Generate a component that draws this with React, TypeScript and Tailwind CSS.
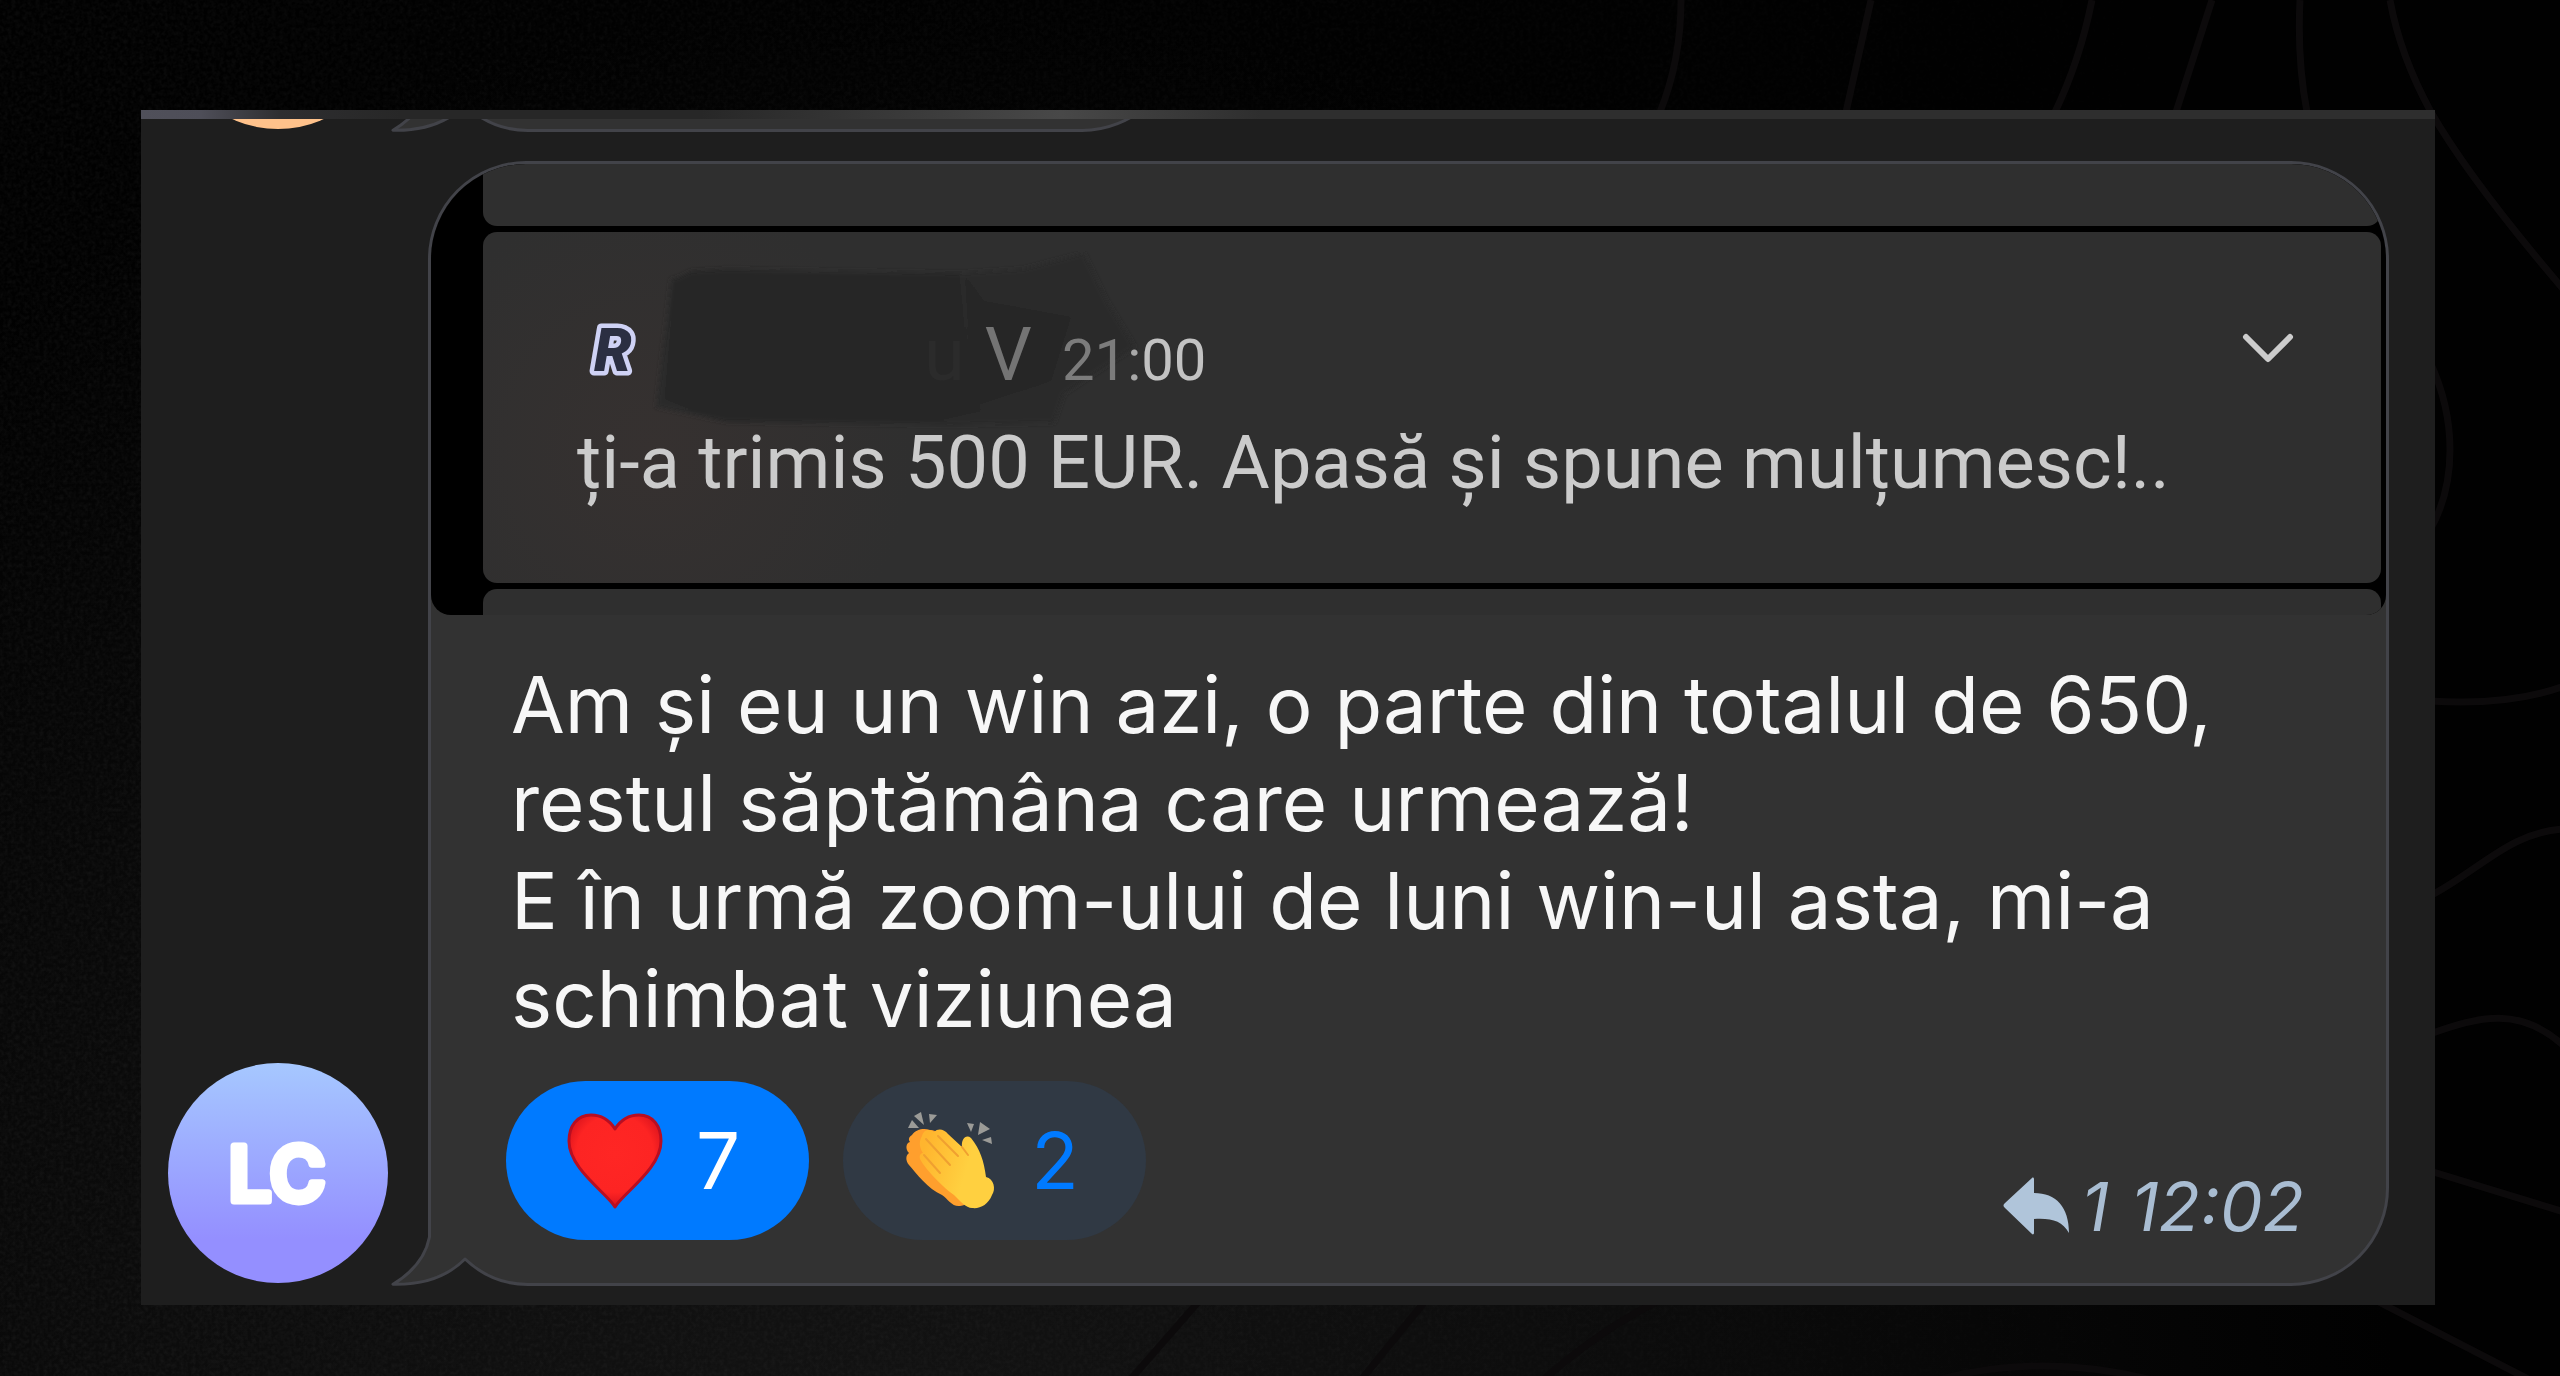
// App.tsx
import type { ReactNode } from "react";

interface Reaction {
  emoji: "heart" | "clap";
  count: number;
  chosen: boolean;
}

const reactions: Reaction[] = [
  { emoji: "heart", count: 7, chosen: true },
  { emoji: "clap", count: 2, chosen: false },
];

function Backdrop() {
  return (
    <svg
      className="absolute inset-0 w-full h-full"
      viewBox="0 0 2560 1376"
      preserveAspectRatio="none"
      aria-hidden="true"
    >
      <defs>
        <filter id="grain" x="0" y="0" width="100%" height="100%">
          <feTurbulence type="fractalNoise" baseFrequency="0.25" numOctaves="3" seed="4" />
          <feColorMatrix values="0 0 0 0 1  0 0 0 0 1  0 0 0 0 1  0.16 0 0 0 -0.045" />
        </filter>
        <radialGradient id="glow" gradientUnits="userSpaceOnUse" cx="900" cy="1500" r="1500">
          <stop offset="0" stopColor="#131313" />
          <stop offset="0.5" stopColor="#0c0c0c" />
          <stop offset="1" stopColor="#010101" />
        </radialGradient>
        <linearGradient id="fade" x1="0" x2="1">
          <stop offset="0" stopColor="#fff" />
          <stop offset="0.6" stopColor="#888" />
          <stop offset="0.95" stopColor="#000" />
        </linearGradient>
        <mask id="grainMask">
          <rect width="2560" height="1376" fill="url(#fade)" />
        </mask>
      </defs>
      <rect width="2560" height="1376" fill="url(#glow)" />
      <g mask="url(#grainMask)">
        <rect width="2560" height="1376" filter="url(#grain)" opacity="0.45" />
      </g>
      <g fill="none" stroke="#0c0a0b" strokeWidth="7">
        <path d="M1681 0Q1681 60 1660 112" />
        <path d="M1871 0L1846 112" />
        <path d="M2092 0Q2080 60 2055 112" />
        <path d="M2212 0L2176 112" />
        <path d="M2300 0Q2297 60 2307 112" />
        <path d="M2390 0Q2400 55 2431 112Q2470 180 2564 290" />
        <path d="M2430 362Q2450 405 2450 450Q2450 495 2430 530" />
        <path d="M2430 701Q2510 706 2564 686" />
        <path d="M2430 896C2480 870 2510 832 2564 829" />
        <path d="M2430 1034C2480 1016 2520 1006 2564 1046" />
        <path d="M2430 1171L2564 1212" />
        <path d="M2375 1300L2530 1380" />
        <path d="M1200 1300L1130 1380" />
        <path d="M1426 1300L1361 1380" />
        <path d="M1660 1300Q1600 1330 1543 1380" />
        <path d="M1930 1382Q2040 1350 2160 1382" />
      </g>
    </svg>
  );
}

// bottom left corner of a bubble: hides the square corner and draws the tail
function BubbleTail() {
  return (
    <svg
      className="absolute bottom-0 -left-[40px]"
      width="140"
      height="60"
      viewBox="0 0 140 60"
      aria-hidden="true"
    >
      <rect width="140" height="60" fill="#1e1e1e" />
      <path
        d="M41.5 0V11C37 34 22 48 5 58.3C36 59 60 50 77 33C95 50 116 58.5 140 58.5V0Z"
        fill="#323232"
      />
      <path
        d="M41.5 0V11C37 34 22 48 5 58.3C36 59 60 50 77 33C95 50 116 58.5 140 58.5"
        fill="none"
        stroke="#424349"
        strokeWidth="3"
        strokeLinejoin="round"
      />
    </svg>
  );
}

function Bubble({ className, children }: { className: string; children?: ReactNode }) {
  return (
    <div className={`relative ${className}`}>
      <div className="min-h-60 rounded-[98px] rounded-bl-none border-[3px] border-[#424349] bg-[#323232]">
        {children}
      </div>
      <BubbleTail />
    </div>
  );
}

function RevolutLogo() {
  return (
    <svg width="64" height="70" viewBox="0 0 64 70" role="img" aria-label="Revolut">
      <text
        x="10"
        y="56"
        fontFamily="Roboto, sans-serif"
        fontSize="60"
        fontWeight="900"
        fontStyle="italic"
        fill="#2b2f42"
        stroke="#cfd2f5"
        strokeWidth="9"
        strokeLinejoin="round"
        paintOrder="stroke"
      >
        R
      </text>
    </svg>
  );
}

// brushed-over part of the sender name
function Smudge() {
  return (
    <svg
      className="absolute left-[74px] -top-[50px]"
      width="490"
      height="180"
      viewBox="0 0 490 180"
      aria-hidden="true"
    >
      <g filter="url(#soft)">
        <path
          d="M20 28L76 18L310 22L372 18L433 2L456 50L484 96L413 143L403 172L300 174L76 171L5 156Z"
          fill="#2a2a2a"
        />
        <path d="M24 28L40 20L76 18L180 24L308 22L318 130L330 160L280 171L76 171L44 160L14 148Z" fill="#252525" />
        <path d="M314 24L333 50L420 66L400 130L322 156Z" fill="#282828" />
      </g>
      <filter id="soft">
        <feGaussianBlur stdDeviation="2" />
      </filter>
    </svg>
  );
}

function Notification() {
  return (
    <div className="flex flex-col gap-[6px] overflow-hidden rounded-t-[95px] rounded-b-[20px] bg-black pl-[52px] pr-[5px]">
      <div className="h-[62px] rounded-b-[14px] bg-[#2f2f2f]" />
      <div className="rounded-[14px] bg-[#2f2f2f] bg-[radial-gradient(circle_at_170px_220px,#363130,#2f2f2f_260px)] pl-[94px] pr-[83px] pt-[69px] pb-[66px] font-['Roboto',sans-serif] text-[74px] leading-[108px] text-[#cbcbcb]">
        <div className="relative flex items-center justify-between">
          <Smudge />
          <div className="relative flex items-center">
            <div className="pl-[7px] pb-[10px]">
              <RevolutLogo />
            </div>
            <div className="flex items-baseline pl-[276px]">
              <span className="text-[#2b2b2b]">u</span>
              <span className="pl-[20px] text-[#747474]">V</span>
              <time className="pl-[30px] text-[58px] leading-none">
                <span className="text-[#7c7c7c]">21</span>
                <span className="text-[#a8a8a8]">:</span>
                <span className="text-[#c2c2c2]">00</span>
              </time>
            </div>
          </div>
          <button type="button" aria-label="Extinde" className="shrink-0">
            <svg width="60" height="60" viewBox="0 0 60 60">
              <path
                d="M8 12L30 34L52 12"
                fill="none"
                stroke="#cccccc"
                strokeWidth="6"
                strokeLinecap="round"
                strokeLinejoin="round"
              />
            </svg>
          </button>
        </div>
        <p>ți-a trimis 500 EUR. Apasă și spune mulțumesc!..</p>
      </div>
      <div className="h-[26px] rounded-t-[14px] bg-[#2f2f2f]" />
    </div>
  );
}

function HeartEmoji() {
  return (
    <svg width="96" height="96" viewBox="0 0 96 96" aria-hidden="true">
      <defs>
        <radialGradient id="heart" cx="0.5" cy="0.42" r="0.6">
          <stop offset="0" stopColor="#ff2624" />
          <stop offset="0.7" stopColor="#fd2423" />
          <stop offset="1" stopColor="#d4101c" />
        </radialGradient>
      </defs>
      <path
        d="M48 16C41 5 33 2 24 2C10 2 2 13 2 28C2 56 40 80 48 94C56 80 94 56 94 28C94 13 86 2 72 2C63 2 55 5 48 16Z"
        fill="url(#heart)"
        stroke="#b80e22"
        strokeWidth="3"
        strokeLinejoin="round"
      />
    </svg>
  );
}

function ClapEmoji() {
  return (
    <svg width="96" height="100" viewBox="0 0 96 100" aria-hidden="true">
      <defs>
        <linearGradient id="palm" x1="0" y1="0.4" x2="0.6" y2="0.6">
          <stop offset="0" stopColor="#ffb52e" />
          <stop offset="1" stopColor="#ffd040" />
        </linearGradient>
      </defs>
      <g fill="#9b9b97">
        <path d="M4 17L8 9L15 17Z" />
        <path d="M10 5L17 1L20 14Z" />
        <path d="M25 3L33 4L26 12Z" />
        <path d="M63 12L70 13L67 21Z" />
        <path d="M76 11L86 18L74 24Z" />
        <path d="M78 29L87 26L88 33Z" />
      </g>
      <path
        d="M8 24C12 18 20 17 26 19C36 18 60 40 72 60C84 76 70 94 56 95C48 96 44 88 38 84C24 78 12 62 5 54C1 49 2 44 5 42C1 38 2 32 6 31C4 28 5 26 8 24Z"
        fill="#ff9f2d"
      />
      <path
        d="M18 25C20 18 26 18 30 21C34 17 40 18 44 23L58 36C57 28 62 23 67 27C76 38 80 50 82 66C90 68 92 78 88 84C84 94 76 98 68 97C62 97 56 90 50 84C36 74 20 56 16 48C15 44 17 42 19 42C15 36 15 30 18 25Z"
        fill="url(#palm)"
      />
      <path
        d="M22 28L46 54M34 25L54 45M20 44L36 62M58 36L64 44"
        fill="none"
        stroke="#f0a030"
        strokeWidth="2"
        strokeLinecap="round"
      />
    </svg>
  );
}

function ReactionButton({ emoji, count, chosen }: Reaction) {
  return (
    <button
      type="button"
      aria-pressed={chosen}
      className={`flex h-[159px] items-center gap-[30px] rounded-full pl-[61px] pr-[66px] text-[78px] ${
        chosen ? "bg-[#007aff] text-white" : "bg-[#303944] text-[#007aff]"
      }`}
    >
      {emoji === "heart" ? <HeartEmoji /> : <ClapEmoji />}
      <span className="w-[50px] text-center">{count}</span>
    </button>
  );
}

export default function App() {
  return (
    <div className="relative min-h-screen bg-[#060606] font-['Inter',sans-serif]">
      <Backdrop />
      <main className="relative pl-[141px] pr-[125px] pt-[110px]">
        <div className="bg-[#1e1e1e] pb-[19px]">
          <div className="h-[9px] bg-[linear-gradient(90deg,#50505a_0,#4e4e58_60px,#2e2e30_140px,#272727_260px,#272727_560px,#484848_920px,#2e2e2e_1120px,#2e2e2e_100%)]" />

          {/* Previous message, scrolled out */}
          <div className="flex h-[13px] items-end gap-[40px] overflow-hidden pl-[27px] pr-[46px]">
            <div className="mb-[3px] size-[220px] shrink-0 rounded-full bg-[#ffc28b]" />
            <Bubble className="w-[752px]" />
          </div>

          {/* Message */}
          <article className="flex items-end gap-[40px] pl-[27px] pr-[46px] pt-[29px]">
            <svg className="mb-[3px] shrink-0" width="220" height="220" viewBox="0 0 220 220">
              <defs>
                <linearGradient id="avatar" x1="0" y1="0" x2="0" y2="1">
                  <stop offset="0" stopColor="#a6c8ff" />
                  <stop offset="0.8" stopColor="#948fff" />
                  <stop offset="1" stopColor="#948fff" />
                </linearGradient>
              </defs>
              <circle cx="110" cy="110" r="110" fill="url(#avatar)" />
              <text
                x="109"
                y="138"
                textAnchor="middle"
                fontFamily="Inter, sans-serif"
                fontSize="76"
                fontWeight="600"
                fill="#fff"
                stroke="#fff"
                strokeWidth="7"
                strokeLinejoin="round"
              >
                LC
              </text>
            </svg>

            <Bubble className="min-w-0 flex-1">
              <Notification />
              <p className="pl-[80px] pr-[70px] pt-[41px] text-[78px] leading-[98px] text-[#f7f7f7]">
                Am și eu un win azi, o parte din totalul de 650, restul săptămâna care urmează!
                <br />E în urmă zoom-ului de luni win-ul asta, mi-a schimbat viziunea
              </p>
              <div className="flex items-end justify-between pl-[75px] pr-[82px] pt-[33px] pb-[43px]">
                <div className="flex gap-[34px]">
                  {reactions.map((reaction) => (
                    <ReactionButton key={reaction.emoji} {...reaction} />
                  ))}
                </div>
                <div className="flex items-center gap-[10px] text-[68px] leading-[68px] italic text-[#a9bdd2]">
                  <svg width="68" height="58" viewBox="0 0 68 58" aria-hidden="true">
                    <path
                      d="M29 1C30 0 31 1 31 2V16C53 16 66 30 66 56C59 44 49 41 31 42V56C31 57 30 58 29 57L2 31C0 29 0 28 2 26Z"
                      fill="#b0c5da"
                    />
                  </svg>
                  <span className="pr-[12px]">1</span>
                  <time>12:02</time>
                </div>
              </div>
            </Bubble>
          </article>
        </div>
      </main>
    </div>
  );
}
